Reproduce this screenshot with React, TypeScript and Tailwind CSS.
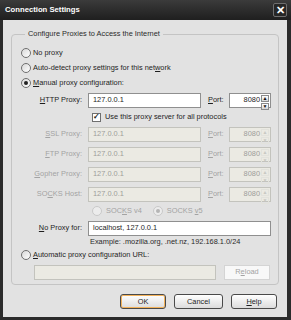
import type { ReactNode } from "react";

function U({ children }: { children: ReactNode }) {
  return <span className="underline underline-offset-[1px]">{children}</span>;
}

function Radio({
  checked,
  disabled,
  children,
}: {
  checked?: boolean;
  disabled?: boolean;
  children: ReactNode;
}) {
  return (
    <div className="flex items-center gap-[2px]">
      <div
        className={`flex h-[10px] w-[10px] items-center justify-center rounded-full border ${
          disabled ? "border-[#c9c9c9] bg-[#ececec]" : "border-[#6f6f6f] bg-gradient-to-br from-[#d8d8d8] to-white"
        }`}
      >
        {checked && (
          <div className={`h-[4px] w-[4px] rounded-full ${disabled ? "bg-[#b5b5b5]" : "bg-[#222]"}`} />
        )}
      </div>
      <span className={disabled ? "text-[#a3a3a3]" : "text-[#1e1e1e]"}>{children}</span>
    </div>
  );
}

function Spinner({ disabled }: { disabled?: boolean }) {
  const box = disabled
    ? "border-[#e2e2dc] text-[#c9c9c4]"
    : "border-[#8a8a8a] bg-gradient-to-b from-white to-[#d6d6d6] text-[#111]";
  return (
    <div className="flex h-full w-[9px] flex-col gap-px py-px pr-px">
      <div className={`flex flex-1 items-center justify-center border text-[5px] leading-none ${box}`}>▲</div>
      <div className={`flex flex-1 items-center justify-center border text-[5px] leading-none ${box}`}>▼</div>
    </div>
  );
}

function Field({
  value,
  disabled,
  width,
  port,
}: {
  value: string;
  disabled?: boolean;
  width: string;
  port?: boolean;
}) {
  return (
    <div
      className={`flex h-[15px] items-center border ${width} ${
        disabled ? "border-[#c3c3bd] bg-[#ebeae3] text-[#9e9e9a]" : "border-[#8f8f8f] bg-white text-[#1e1e1e]"
      }`}
    >
      {port ? (
        <>
          <span className="flex-1 pr-[1px] text-right">{value}</span>
          <Spinner disabled={disabled} />
        </>
      ) : (
        <span className="pl-[4px]">{value}</span>
      )}
    </div>
  );
}

function ProxyRow({ label, disabled }: { label: ReactNode; disabled?: boolean }) {
  const tone = disabled ? "text-[#a3a3a3]" : "text-[#1e1e1e]";
  return (
    <div className="flex h-[20px] items-center">
      <div className={`w-[61px] text-right ${tone}`}>{label}</div>
      <div className="ml-[6px]">
        <Field value="127.0.0.1" disabled={disabled} width="w-[113px]" />
      </div>
      <div className={`ml-[7px] w-[21px] ${tone}`}>
        <U>P</U>ort:
      </div>
      <Field value="8080" disabled={disabled} width="w-[42px]" port />
    </div>
  );
}

function Button({ children, primary, width }: { children: ReactNode; primary?: boolean; width: string }) {
  return (
    <div
      className={`flex h-[15px] items-center justify-center rounded-[3px] border border-[#4a4a4a] bg-gradient-to-b from-white to-[#dcdcdc] text-[#1e1e1e] ${width} ${
        primary ? "shadow-[inset_0_0_0_1px_#f3b25a]" : ""
      }`}
    >
      {children}
    </div>
  );
}

export default function App() {
  return (
    <div className="flex h-[320px] w-[291px] flex-col bg-[#2b2b2b] font-['Liberation_Sans',Arial,sans-serif] text-[7.4px] leading-none">
      <div className="flex h-[20px] items-center bg-gradient-to-b from-[#3b3b3b] to-[#1f1f1f] pl-[5px] pr-[4px]">
        <span className="flex-1 text-[7.7px] font-bold text-white">Connection Settings</span>
        <div className="flex h-[14px] w-[14px] items-center justify-center rounded-[2px] border border-[#6e6e6e] bg-[#262626] text-[11px] font-bold text-white">
          ✕
        </div>
      </div>
      <div className="ml-[3px] mr-[4px] flex flex-1 flex-col bg-[#e2e2e2] mb-[3px]">
        <fieldset className="ml-[8px] mt-[8px] w-[268px] rounded-[4px] border border-[#c4c4c4] pb-[4px] pl-[9px]">
          <legend className="ml-[4px] px-[3px] leading-[12px] text-[#2a2a2a]">
            Configure Proxies to Access the Internet
          </legend>
          <div className="mt-[5px] flex h-[15px] items-center">
            <Radio>No proxy</Radio>
          </div>
          <div className="flex h-[15px] items-center">
            <Radio>
              Auto-detect proxy settings for this net<U>w</U>ork
            </Radio>
          </div>
          <div className="flex h-[15px] items-center">
            <Radio checked>
              <U>M</U>anual proxy configuration:
            </Radio>
          </div>
          <ProxyRow
            label={
              <>
                <U>H</U>TTP Proxy:
              </>
            }
          />
          <div className="flex h-[14px] items-center pl-[71px]">
            <div className="flex h-[9px] w-[9px] items-center justify-center border border-[#6f6f6f] bg-white text-[8px] font-bold text-[#222]">
              ✓
            </div>
            <span className="ml-[4px] text-[#1e1e1e]">Use this proxy server for all protocols</span>
          </div>
          <ProxyRow
            disabled
            label={
              <>
                <U>S</U>SL Proxy:
              </>
            }
          />
          <ProxyRow
            disabled
            label={
              <>
                <U>F</U>TP Proxy:
              </>
            }
          />
          <ProxyRow
            disabled
            label={
              <>
                <U>G</U>opher Proxy:
              </>
            }
          />
          <ProxyRow
            disabled
            label={
              <>
                SO<U>C</U>KS Host:
              </>
            }
          />
          <div className="flex h-[14px] items-center pl-[71px]">
            <Radio disabled>
              <span className="ml-[2px]">
                SOC<U>K</U>S v4
              </span>
            </Radio>
            <div className="ml-[11px]">
              <Radio checked disabled>
                <span className="ml-[2px]">
                  SOCKS <U>v</U>5
                </span>
              </Radio>
            </div>
          </div>
          <div className="flex h-[20px] items-center">
            <div className="w-[61px] text-right text-[#1e1e1e]">
              <U>N</U>o Proxy for:
            </div>
            <div className="ml-[6px]">
              <Field value="localhost, 127.0.0.1" width="w-[183px]" />
            </div>
          </div>
          <div className="flex h-[8px] items-center pl-[69px] text-[#2a2a2a]">
            Example: .mozilla.org, .net.nz, 192.168.1.0/24
          </div>
          <div className="flex h-[18px] items-center">
            <Radio>
              <U>A</U>utomatic proxy configuration URL:
            </Radio>
          </div>
          <div className="flex h-[16px] items-center pl-[13px]">
            <Field value="" disabled width="w-[182px]" />
            <div className="ml-[8px] flex h-[15px] w-[46px] items-center justify-center border border-[#d4d4d4] bg-[#f8f8f8] text-[#a3a3a3]">
              R<U>e</U>load
            </div>
          </div>
        </fieldset>
        <div className="mt-[9px] flex justify-end gap-[8px] pr-[10px]">
          <Button primary width="w-[46px]">
            OK
          </Button>
          <Button width="w-[49px]">Cancel</Button>
          <Button width="w-[46px]">
            <U>H</U>elp
          </Button>
        </div>
      </div>
    </div>
  );
}
